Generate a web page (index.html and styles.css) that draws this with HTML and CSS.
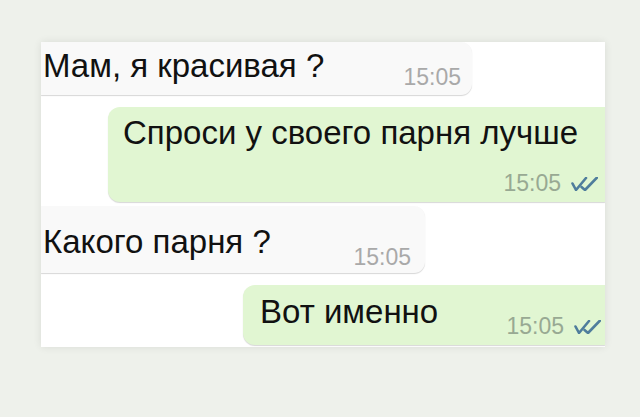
FILE: index.html
```html
<!DOCTYPE html>
<html lang="ru">
<head>
    <meta charset="UTF-8">
    <meta name="viewport" content="width=device-width, initial-scale=1.0">
    <title>Чат</title>
    <link rel="stylesheet" href="styles.css">
</head>
<body>
    <div class="chat">
        <!-- Входящее -->
        <div class="msg msg-in msg-first">
            <span class="msg-text">Мам, я красивая ?</span>
            <span class="msg-time">15:05</span>
        </div>

        <!-- Исходящее -->
        <div class="msg msg-out msg-long">
            <div class="msg-text">Спроси у своего парня лучше</div>
            <div class="msg-meta">
                <span class="msg-time">15:05</span>
                <svg class="ticks" viewBox="0 0 27 14" width="27" height="14">
                    <path d="M1.5 6.5 L5 13 L15 1" />
                    <path d="M10.5 10 L14 13 L26 0.5" />
                </svg>
            </div>
        </div>

        <div class="msg msg-in msg-third">
            <span class="msg-text">Какого парня ?</span>
            <span class="msg-time">15:05</span>
        </div>

        <div class="msg msg-out msg-short">
            <span class="msg-text">Вот именно</span>
            <div class="msg-meta">
                <span class="msg-time">15:05</span>
                <svg class="ticks" viewBox="0 0 27 14" width="27" height="14">
                    <path d="M1.5 6.5 L5 13 L15 1" />
                    <path d="M10.5 10 L14 13 L26 0.5" />
                </svg>
            </div>
        </div>
    </div>
</body>
</html>
```

FILE: styles.css
```css
/* Fondo general */
body {
    margin: 0;
    padding: 42px 0 0 41px;
    background: #eef1eb;
    font-family: "Liberation Sans", Arial, sans-serif;
    height: 100vh;
    box-sizing: border-box;
}

.chat {
    width: 564px;
    height: 305px;
    background: #ffffff;
    box-shadow: 0 0 8px rgba(0, 0, 0, 0.09);
    display: flex;
    flex-direction: column;
    overflow: hidden;
}

/* Burbujas */
.msg {
    display: flex;
    align-items: flex-start;
    box-sizing: border-box;
    box-shadow: 0 1px 1px rgba(0, 0, 0, 0.16);
}

.msg-text {
    font-size: 33px;
    line-height: 36px;
    color: #111111;
    white-space: nowrap;
}

.msg-time {
    font-size: 23px;
    line-height: 22px;
    color: #a9a9a9;
}

.msg-in {
    align-self: flex-start;
    background: #f9f9f9;
    border-radius: 0 11px 11px 0;
}

.msg-in .msg-time {
    margin-left: auto;
}

.msg-out {
    align-self: flex-end;
    background: #e1f6d2;
    border-radius: 12px 0 0 12px;
}

.msg-out .msg-time {
    color: #98a993;
}

.msg-meta {
    display: flex;
    align-items: flex-end;
    gap: 10px;
    margin-left: auto;
}

.ticks {
    display: block;
    margin-bottom: 3px;
}

.ticks path {
    fill: none;
    stroke: #4f7d9c;
    stroke-width: 2.6;
    stroke-linecap: round;
    stroke-linejoin: round;
}

/* Ajustes de cada mensaje */
.msg-first {
    width: 431px;
    padding: 6px 11px 7px 2px;
}

.msg-first .msg-time {
    margin-top: 18px;
}

.msg-long {
    width: 497px;
    margin-top: 12px;
    flex-direction: column;
    align-items: stretch;
    padding: 8px 7px 8px 15px;
}

.msg-long .msg-meta {
    margin-top: 21px;
}

.msg-third {
    width: 384px;
    margin-top: 4px;
    padding: 18px 14px 5px 2px;
}

.msg-third .msg-time {
    margin-top: 22px;
}

.msg-short {
    width: 362px;
    margin-top: 12px;
    padding: 9px 4px 8px 17px;
}

.msg-short .msg-meta {
    margin-top: 21px;
}
```
